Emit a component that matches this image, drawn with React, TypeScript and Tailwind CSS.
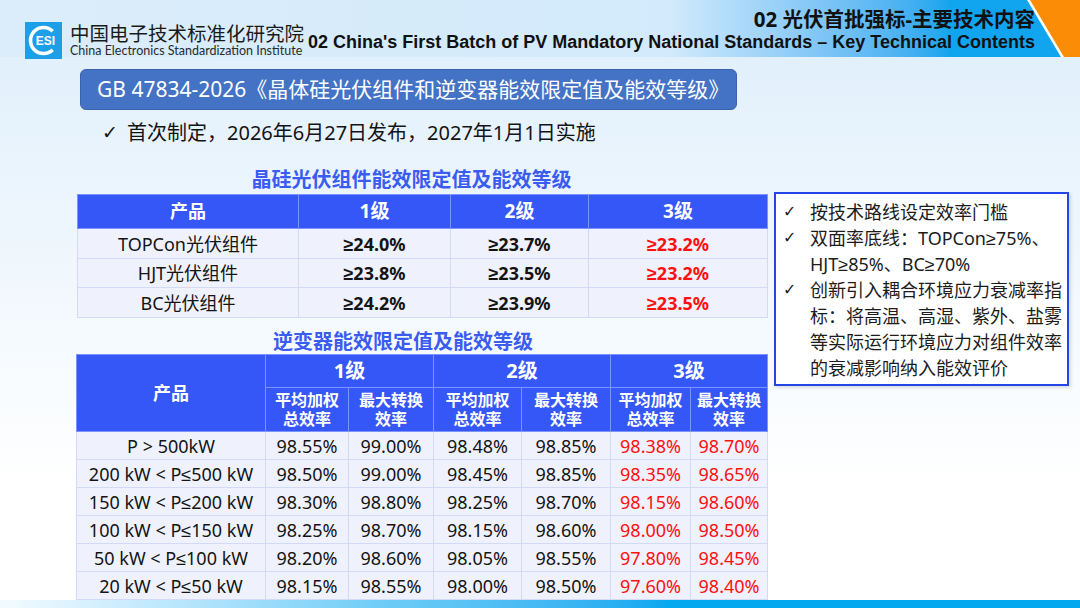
import React from "react";

const FONT = "font-['Noto_Sans','Liberation_Sans','Noto_Sans_CJK_SC',sans-serif]";

function Logo() {
  return (
    <svg width="37" height="37" viewBox="0 0 37 37">
      <rect x="0" y="0" width="37" height="37" fill="#1c9ee9" />
      <path d="M 27.7 9.3 A 13 13 0 1 0 27.7 27.7" fill="none" stroke="#fff" strokeWidth="3.6" />
      <text x="20.5" y="23" textAnchor="middle" fontSize="12" fontWeight="700" fill="#fff" fontFamily="Liberation Sans, Arial, sans-serif">
        ESI
      </text>
    </svg>
  );
}

const t1 = [
  ["TOPCon光伏组件", "≥24.0%", "≥23.7%", "≥23.2%"],
  ["HJT光伏组件", "≥23.8%", "≥23.5%", "≥23.2%"],
  ["BC光伏组件", "≥24.2%", "≥23.9%", "≥23.5%"],
];

const t2 = [
  ["P > 500kW", "98.55%", "99.00%", "98.48%", "98.85%", "98.38%", "98.70%"],
  ["200 kW < P≤500 kW", "98.50%", "99.00%", "98.45%", "98.85%", "98.35%", "98.65%"],
  ["150 kW < P≤200 kW", "98.30%", "98.80%", "98.25%", "98.70%", "98.15%", "98.60%"],
  ["100 kW < P≤150 kW", "98.25%", "98.70%", "98.15%", "98.60%", "98.00%", "98.50%"],
  ["50 kW < P≤100 kW", "98.20%", "98.60%", "98.05%", "98.55%", "97.80%", "98.45%"],
  ["20 kW < P≤50 kW", "98.15%", "98.55%", "98.00%", "98.50%", "97.60%", "98.40%"],
];

export default function App() {
  return (
    <div className={`w-[1080px] h-[608px] overflow-hidden flex flex-col bg-linear-to-b from-[#deeefb] to-white to-80% text-[#141414] ${FONT}`}>
      {/* Header */}
      <div className="relative h-[57px] shrink-0 flex justify-between bg-linear-to-r from-[#dcedfa] from-0% via-[#d2eafb] via-62% to-[#10a5ee] to-88%">
        <div className="flex items-start pl-[25px] pt-[22px]">
          <Logo />
          <div className="ml-[8px] -mt-[1px] flex flex-col">
            <div className="text-[19.5px] leading-[23px] text-[#1a1a1a] font-['Noto_Sans_CJK_SC',sans-serif]">中国电子技术标准化研究院</div>
            <div className="text-[12.5px] leading-[13px] text-[#2a2a2a] font-['Lato',sans-serif] whitespace-nowrap">China Electronics Standardization Institute</div>
          </div>
        </div>
        <div className="flex flex-col items-end pr-[45px] pt-[6px] relative z-10">
          <div className="text-[20.5px] leading-[26px] font-bold text-[#111] whitespace-nowrap">02 光伏首批强标-主要技术内容</div>
          <div className="text-[18px] leading-[20px] font-bold text-[#111] whitespace-nowrap font-['Liberation_Sans',Arial,sans-serif]">
            02 China's First Batch of PV Mandatory National Standards – Key Technical Contents
          </div>
        </div>
        <svg className="absolute right-0 top-0" width="53" height="57" viewBox="0 0 53 57">
          <polygon points="0,0 53,0 53,57 34,57" fill="#ffffff" />
          <polygon points="3,0 53,0 53,57 37,57" fill="#fb8c05" />
        </svg>
      </div>

      {/* Title box */}
      <div className="ml-[80px] mt-[12px] w-[657px] h-[41px] shrink-0 rounded-[6px] bg-[#4472c4] border border-[#3b63ad] flex items-center pl-[16px] text-white text-[21px] whitespace-nowrap">
        GB 47834-2026《晶体硅光伏组件和逆变器能效限定值及能效等级》
      </div>

      {/* Bullet line */}
      <div className="ml-[102px] mt-[10px] flex items-center h-[25px] text-[20px] text-[#141414] whitespace-nowrap">
        <span className="w-[25px] text-[19px] font-['DejaVu_Sans',sans-serif]">✓</span>
        <span>首次制定，2026年6月27日发布，2027年1月1日实施</span>
      </div>

      {/* Main */}
      <div className="flex items-start">
        <div className="ml-[76px] w-[691px] flex flex-col">
          <div className="mt-[23px] h-[24px] leading-[24px] text-center text-[20px] font-bold text-[#3a5cf0] pr-[20px]">晶硅光伏组件能效限定值及能效等级</div>
          <table className="mt-[2px] ml-[1px] w-[690px] table-fixed border-collapse text-[18px]">
            <colgroup>
              <col className="w-[221px]" />
              <col className="w-[152px]" />
              <col className="w-[138px]" />
              <col className="w-[179px]" />
            </colgroup>
            <thead>
              <tr className="h-[34px] bg-[#3557f7] text-white font-bold">
                <th className="border border-[#7c94ff] text-[18px] p-0">产品</th>
                <th className="border border-[#7c94ff] text-[19px] p-0">1级</th>
                <th className="border border-[#7c94ff] text-[19px] p-0">2级</th>
                <th className="border border-[#7c94ff] text-[19px] p-0">3级</th>
              </tr>
            </thead>
            <tbody>
              {t1.map((r, i) => (
                <tr key={i} className={i === 1 ? "h-[29px] bg-[#eff2fc]" : "h-[30px] bg-[#eff2fc]"}>
                  <td className="border border-[#d3daf5] text-center p-0 leading-none">{r[0]}</td>
                  <td className="border border-[#d3daf5] text-center p-0 leading-none font-bold">{r[1]}</td>
                  <td className="border border-[#d3daf5] text-center p-0 leading-none font-bold">{r[2]}</td>
                  <td className="border border-[#d3daf5] text-center p-0 leading-none font-bold text-[#ff1010]">{r[3]}</td>
                </tr>
              ))}
            </tbody>
          </table>

          <div className="mt-[12px] h-[24px] leading-[24px] text-center text-[20px] font-bold text-[#3a5cf0] pr-[37px]">逆变器能效限定值及能效等级</div>
          <table className="w-[691px] table-fixed border-collapse text-[18px]">
            <colgroup>
              <col className="w-[189px]" />
              <col className="w-[83px]" />
              <col className="w-[85px]" />
              <col className="w-[88px]" />
              <col className="w-[89px]" />
              <col className="w-[80px]" />
              <col className="w-[77px]" />
            </colgroup>
            <thead className="bg-[#3557f7] text-white font-bold">
              <tr className="h-[33px]">
                <th rowSpan={2} className="border border-[#7c94ff] text-[18px] p-0">产品</th>
                <th colSpan={2} className="border border-[#7c94ff] text-[20px] p-0">1级</th>
                <th colSpan={2} className="border border-[#7c94ff] text-[20px] p-0">2级</th>
                <th colSpan={2} className="border border-[#7c94ff] text-[20px] p-0">3级</th>
              </tr>
              <tr className="h-[44px] text-[16px] leading-[19px]">
                {["a", "b", "c", "d", "e", "f"].map((k, i) => (
                  <th key={k} className="border border-[#7c94ff] p-0 font-bold">
                    {i % 2 === 0 ? (
                      <>
                        平均加权
                        <br />
                        总效率
                      </>
                    ) : (
                      <>
                        最大转换
                        <br />
                        效率
                      </>
                    )}
                  </th>
                ))}
              </tr>
            </thead>
            <tbody>
              {t2.map((r, i) => (
                <tr key={i} className="h-[28px] bg-[#eff2fc]">
                  {r.map((c, j) => (
                    <td
                      key={j}
                      className={
                        j >= 5
                          ? "border border-[#d3daf5] text-center p-0 leading-none whitespace-nowrap text-[#ff1010]"
                          : "border border-[#d3daf5] text-center p-0 leading-none whitespace-nowrap"
                      }
                    >
                      {c}
                    </td>
                  ))}
                </tr>
              ))}
            </tbody>
          </table>
        </div>

        {/* Right box */}
        <div className="ml-[7px] mt-[47px] w-[295px] h-[194px] bg-white border-2 border-[#2445e8] shadow-[2px_2px_3px_rgba(0,0,0,0.12)] pl-[7px] pt-[5px] text-[18px] leading-[26px] text-[#1c1c1c]">
          <div className="flex">
            <span className="w-[27px] shrink-0 text-[16px] font-['DejaVu_Sans',sans-serif]">✓</span>
            <div>按技术路线设定效率门槛</div>
          </div>
          <div className="flex">
            <span className="w-[27px] shrink-0 text-[16px] font-['DejaVu_Sans',sans-serif]">✓</span>
            <div className="whitespace-nowrap">
              <div>双面率底线：TOPCon≥75%、</div>
              <div>HJT≥85%、BC≥70%</div>
            </div>
          </div>
          <div className="flex">
            <span className="w-[27px] shrink-0 text-[16px] font-['DejaVu_Sans',sans-serif]">✓</span>
            <div className="whitespace-nowrap">
              <div>创新引入耦合环境应力衰减率指</div>
              <div>标：将高温、高湿、紫外、盐雾</div>
              <div>等实际运行环境应力对组件效率</div>
              <div>的衰减影响纳入能效评价</div>
            </div>
          </div>
        </div>
      </div>

      {/* Bottom strip */}
      <div className="mt-auto h-[8px] shrink-0 bg-linear-to-r from-[#f4fbff] via-[#6fcdf6] via-35% to-[#03a8ef] to-62%" />
    </div>
  );
}
